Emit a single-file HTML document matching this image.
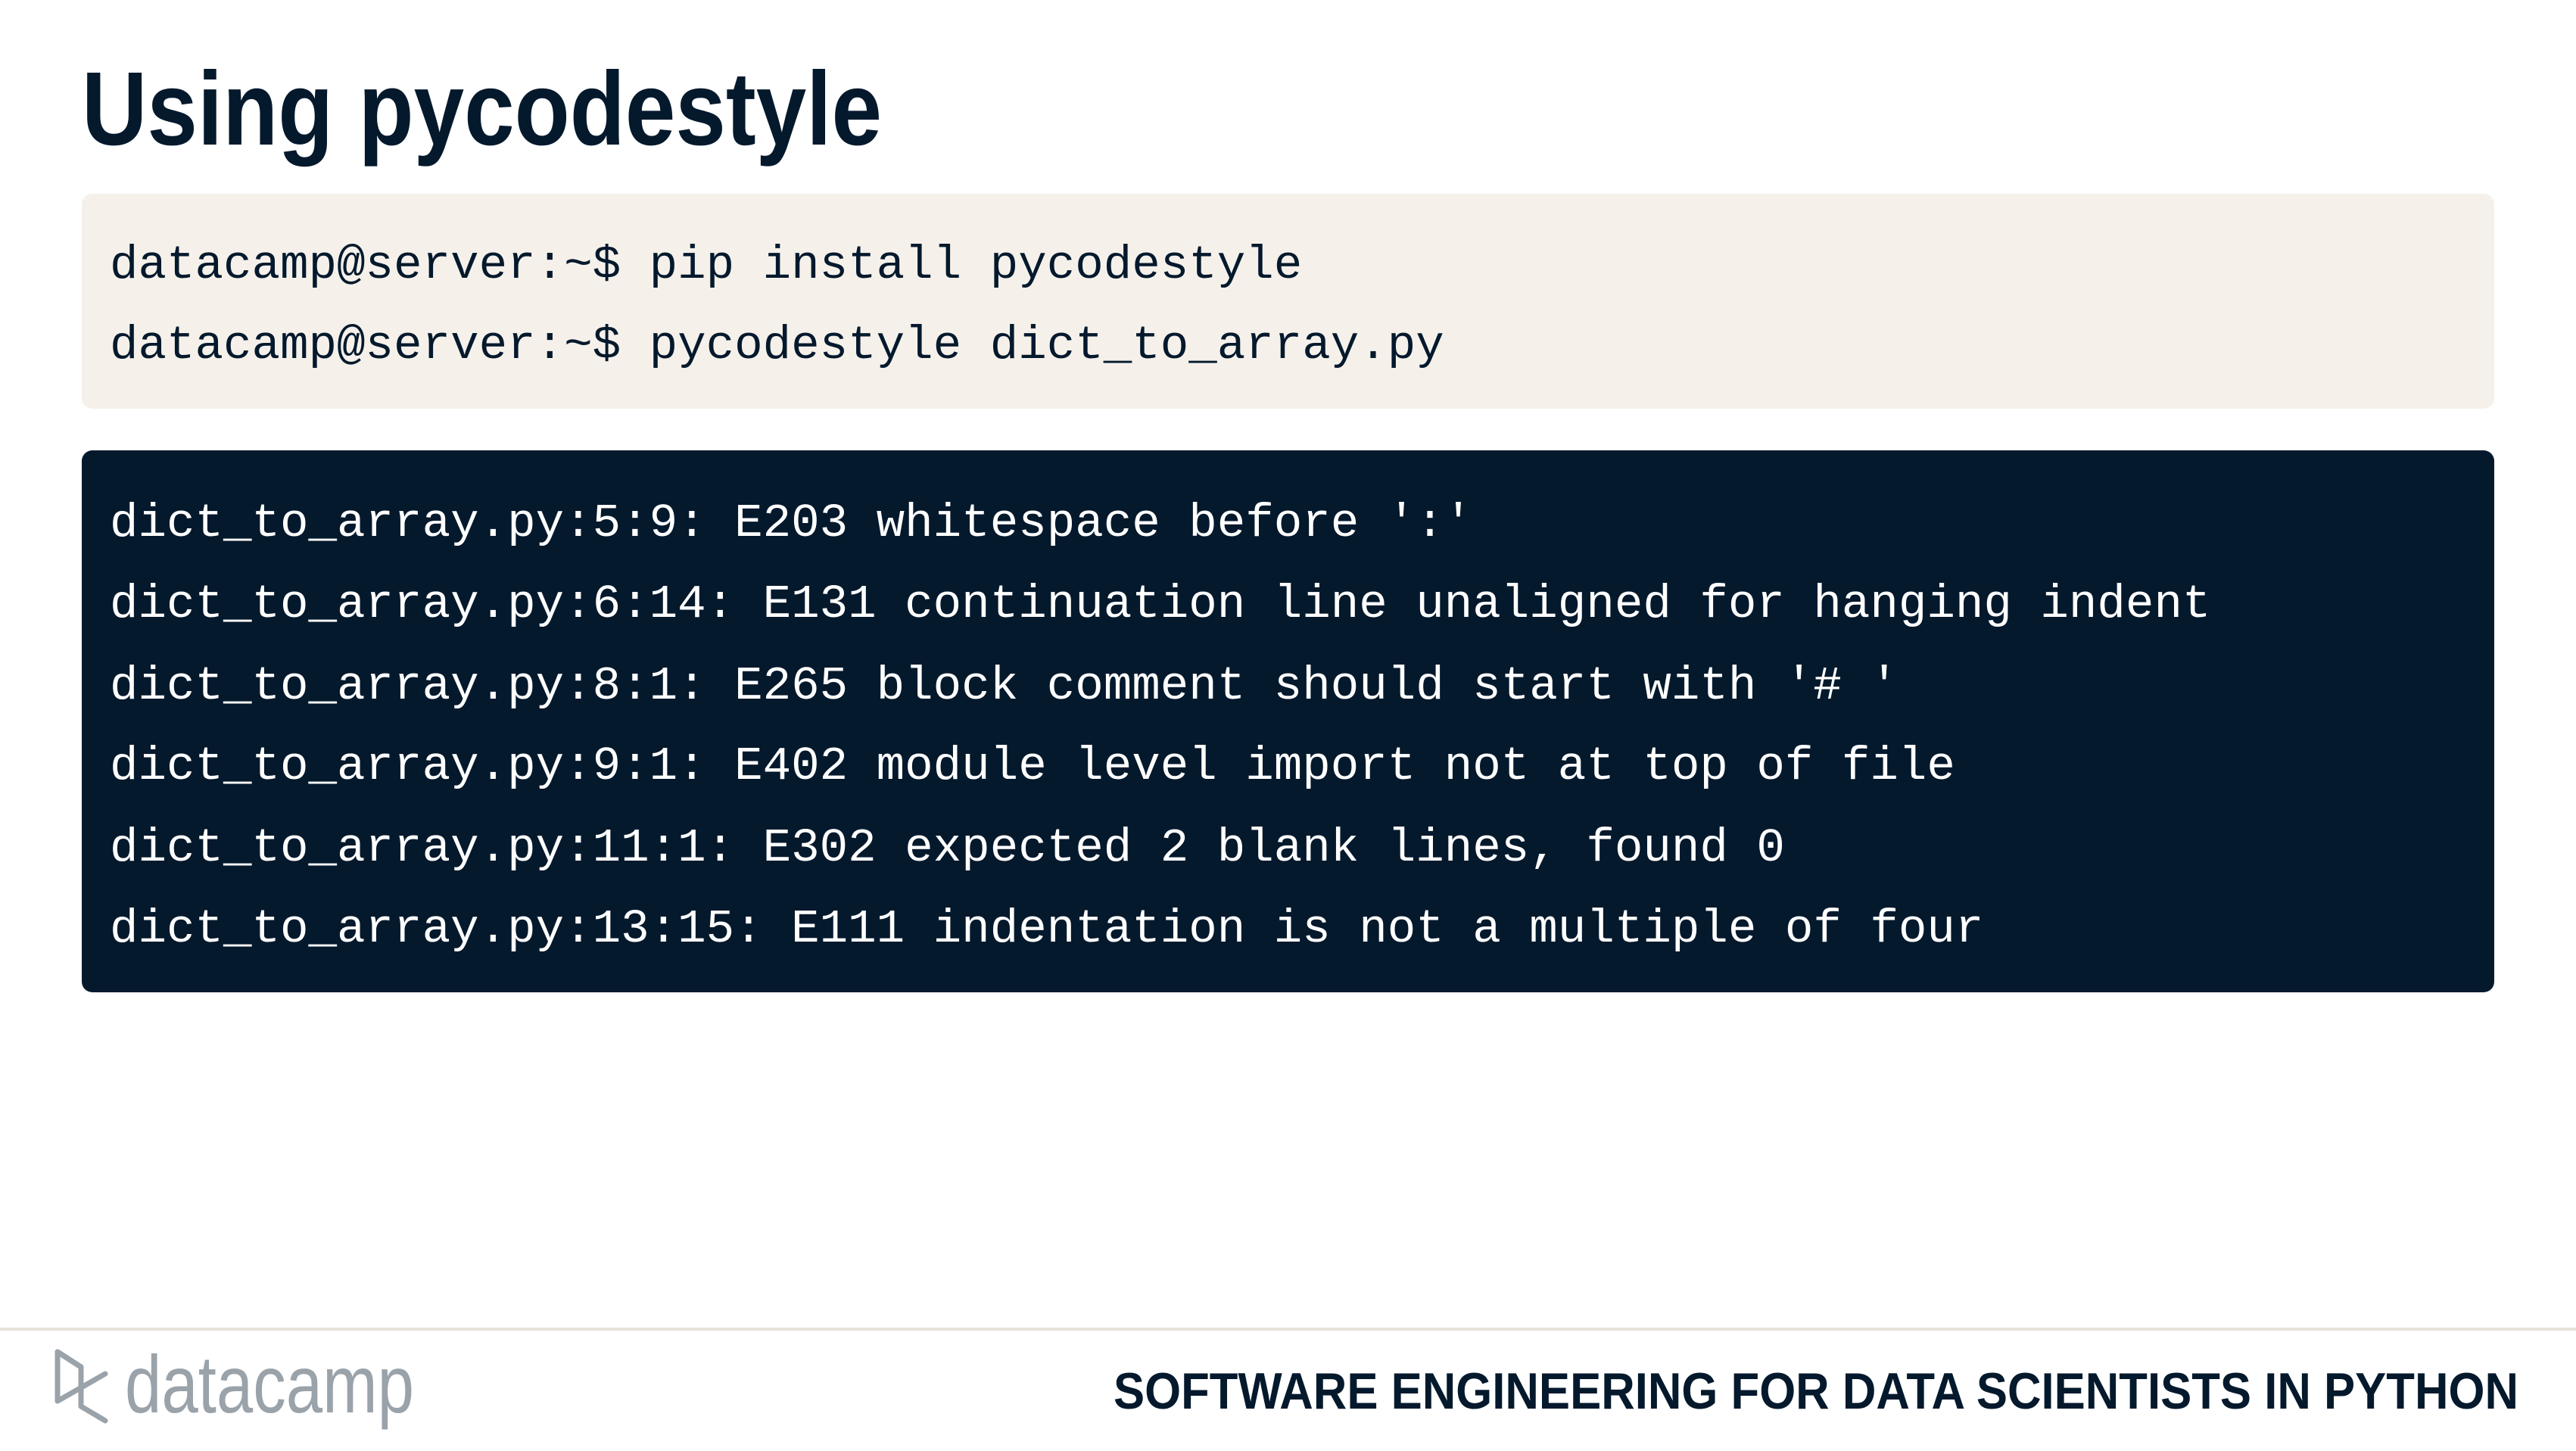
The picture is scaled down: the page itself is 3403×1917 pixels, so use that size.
<!DOCTYPE html>
<html><head><meta charset="utf-8"><style>
html,body{margin:0;padding:0;background:#fff;width:3403px;height:1917px;overflow:hidden}
</style></head><body>
<svg width="3403" height="1917" viewBox="0 0 3403 1917" xmlns="http://www.w3.org/2000/svg">
<rect width="3403" height="1917" fill="#fff"/>
<text x="108" y="191" font-family="Liberation Sans, sans-serif" font-weight="bold" font-size="138" fill="#05192d" textLength="1057" lengthAdjust="spacingAndGlyphs">Using pycodestyle</text>
<rect x="108" y="256" width="3187" height="284" rx="14" fill="#f5f1ea"/>
<g font-family="Liberation Mono, monospace" font-size="62.5" fill="#05192d" xml:space="preserve">
<text x="145" y="367">datacamp@server:~$ pip install pycodestyle</text>
<text x="145" y="473">datacamp@server:~$ pycodestyle dict_to_array.py</text>
</g>
<rect x="108" y="595" width="3187" height="716" rx="14" fill="#05192d"/>
<g font-family="Liberation Mono, monospace" font-size="62.5" fill="#ffffff" xml:space="preserve">
<text x="145" y="708">dict_to_array.py:5:9: E203 whitespace before ':'</text>
<text x="145" y="815">dict_to_array.py:6:14: E131 continuation line unaligned for hanging indent</text>
<text x="145" y="923">dict_to_array.py:8:1: E265 block comment should start with '# '</text>
<text x="145" y="1029">dict_to_array.py:9:1: E402 module level import not at top of file</text>
<text x="145" y="1137">dict_to_array.py:11:1: E302 expected 2 blank lines, found 0</text>
<text x="145" y="1244">dict_to_array.py:13:15: E111 indentation is not a multiple of four</text>
</g>
<rect x="0" y="1754" width="3403" height="4" fill="#e6e2db"/>
<g fill="none" stroke="#9aa2aa" stroke-width="7" stroke-linejoin="round" stroke-linecap="round">
<path d="M107 1806 L76 1786 L76 1851 L139 1815"/>
<path d="M76 1786 L107 1806 L107 1858 L139 1877"/>
</g>
<text x="165" y="1866" font-family="Liberation Sans, sans-serif" font-size="108" fill="#9aa2aa" textLength="382" lengthAdjust="spacingAndGlyphs">datacamp</text>
<text x="1471" y="1861" font-family="Liberation Sans, sans-serif" font-weight="bold" font-size="68" fill="#05192d" textLength="1856" lengthAdjust="spacingAndGlyphs">SOFTWARE ENGINEERING FOR DATA SCIENTISTS IN PYTHON</text>
</svg>
</body></html>
